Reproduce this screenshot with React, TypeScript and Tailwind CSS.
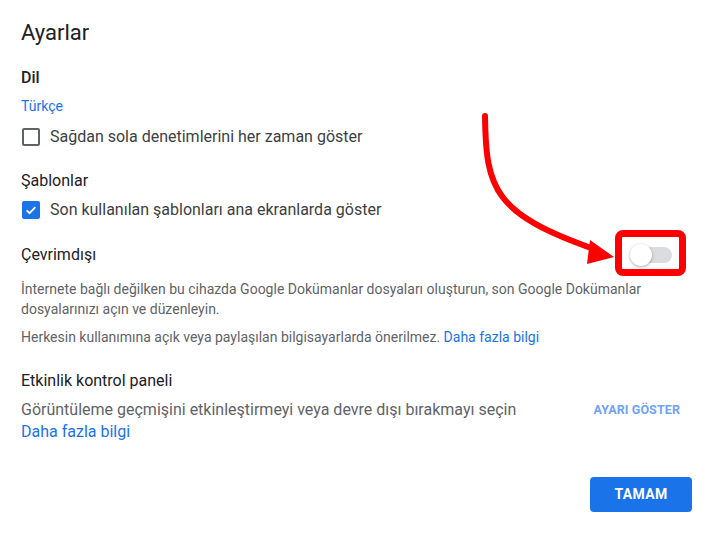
import React from "react";

function Checkbox({ checked }: { checked?: boolean }) {
  if (checked) {
    return (
      <span className="flex h-[18px] w-[18px] shrink-0 items-center justify-center rounded-[2px] bg-[#1a73e8]">
        <svg width="14" height="14" viewBox="0 0 24 24">
          <path d="M4.5 12.5l5 5 10-10.5" fill="none" stroke="#fff" strokeWidth="3" />
        </svg>
      </span>
    );
  }
  return <span className="block h-[18px] w-[18px] shrink-0 rounded-[2px] border-2 border-[#5f6368]" />;
}

export default function App() {
  return (
    <div
      className="relative h-[534px] w-[716px] overflow-hidden bg-white pl-[21px] pt-[19px]"
      style={{ fontFamily: "Roboto, 'Noto Sans', Arial, sans-serif" }}
    >
      <div className="w-[671px]">
        <h1 className="h-[28px] text-[22px] leading-[28px] text-[#202124]">Ayarlar</h1>

        <div className="mt-[19px] h-[24px] text-[16px] font-medium leading-[24px] text-[#202124]">Dil</div>
        <div className="mt-[6px] h-[20px] text-[14px] leading-[20px] text-[#1a73e8]">Türkçe</div>
        <label className="mt-[9px] flex h-[24px] items-center gap-[10px] pl-[1px] text-[16px] leading-[24px] text-[#3c4043]">
          <Checkbox />
          Sağdan sola denetimlerini her zaman göster
        </label>

        <div className="mt-[20px] h-[24px] text-[16px] leading-[24px] text-[#202124]">Şablonlar</div>
        <label className="mt-[5px] flex h-[24px] items-center gap-[10px] pl-[1px] text-[16px] leading-[24px] text-[#3c4043]">
          <Checkbox checked />
          Son kullanılan şablonları ana ekranlarda göster
        </label>

        <div className="mt-[21px] flex h-[24px] items-center justify-between">
          <span className="text-[16px] leading-[24px] text-[#202124]">Çevrimdışı</span>
          <span className="relative mr-[20px] flex h-[22px] w-[42px] items-center">
            <span className="ml-[4px] block h-[16px] w-[38px] rounded-full bg-[#dadce0]" />
            <span className="absolute left-0 top-0 block h-[22px] w-[22px] rounded-full bg-white shadow-[0_1px_3px_rgba(0,0,0,0.35)]" />
            <span className="absolute -left-[15px] -right-[14px] -top-[14px] -bottom-[10px] rounded-[8px] border-[7px] border-[#ff0000]" />
          </span>
        </div>

        <p className="mt-[12px] text-[14px] leading-[20px] text-[#5f6368]">
          İnternete bağlı değilken bu cihazda Google Dokümanlar dosyaları oluşturun, son Google Dokümanlar
          <br />
          dosyalarınızı açın ve düzenleyin.
        </p>
        <p className="mt-[8px] text-[14px] leading-[20px] text-[#5f6368]">
          Herkesin kullanımına açık veya paylaşılan bilgisayarlarda önerilmez.{" "}
          <span className="text-[#1a73e8]">Daha fazla bilgi</span>
        </p>

        <div className="mt-[22px] h-[24px] text-[16px] leading-[24px] text-[#202124]">Etkinlik kontrol paneli</div>
        <div className="mt-[6px] flex items-start justify-between">
          <div className="text-[16px] leading-[22px]">
            <div className="text-[#5f6368]">Görüntüleme geçmişini etkinleştirmeyi veya devre dışı bırakmayı seçin</div>
            <div className="text-[#1a73e8]">Daha fazla bilgi</div>
          </div>
          <span className="mr-[12px] text-[12.5px] font-bold leading-[22px] tracking-[0.1px] text-[#6fa3f5]">
            AYARI GÖSTER
          </span>
        </div>

        <div className="mt-[34px] flex justify-end">
          <button className="h-[35px] w-[102px] rounded-[4px] bg-[#1a73e8] text-[14px] font-bold tracking-[0.3px] text-white">
            TAMAM
          </button>
        </div>
      </div>

      <svg className="pointer-events-none absolute left-0 top-0" width="716" height="534">
        <path
          d="M485 116 C 486 190, 494 214, 597 250"
          fill="none"
          stroke="#ff0000"
          strokeWidth="6"
          strokeLinecap="round"
        />
        <polygon points="590,240 614,257 587,264" fill="#ff0000" />
      </svg>
    </div>
  );
}
